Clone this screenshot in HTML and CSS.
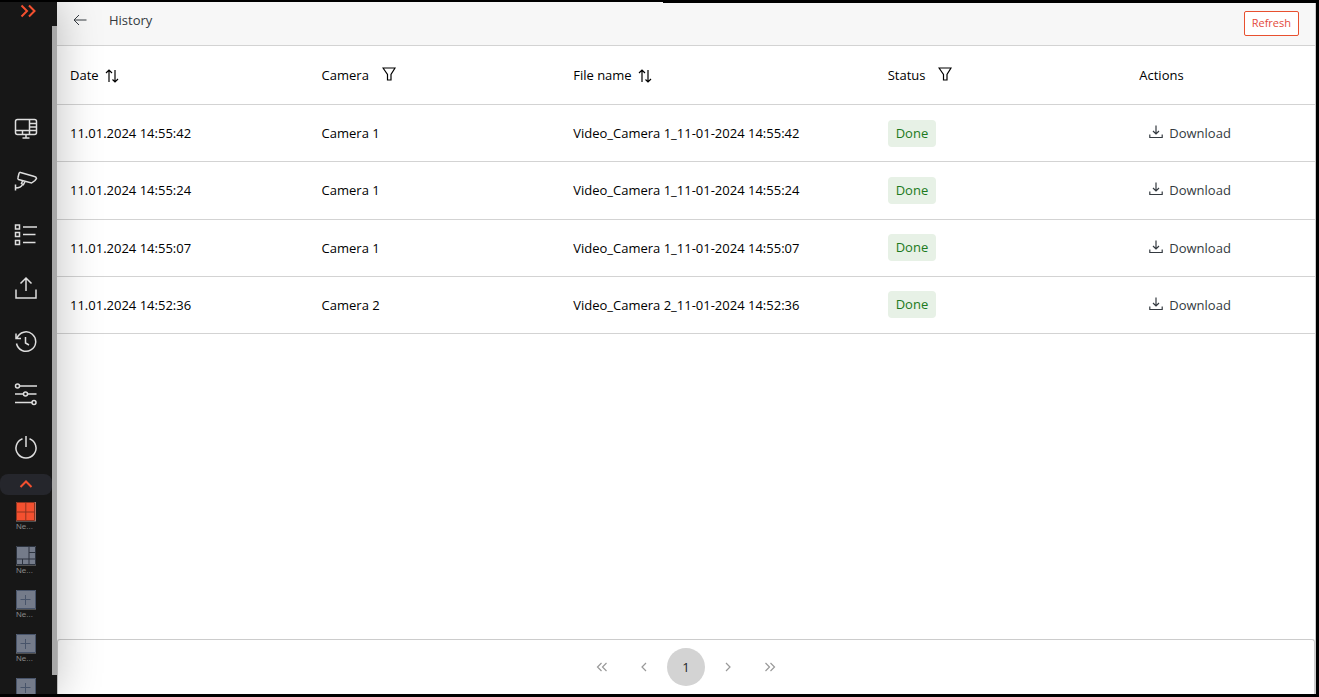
FILE: index.html
```html
<!DOCTYPE html>
<html lang="en">
<head>
<meta charset="utf-8">
<title>History</title>
<link rel="stylesheet" href="styles.css">
</head>
<body>
<svg class="sprite" aria-hidden="true">
  <symbol id="sort" viewBox="0 0 14 14"><path d="M4 13V1M1 4l3-3 3 3M10 1v12M7.500 10.500 10 13l3-3"/></symbol>
  <symbol id="filter" viewBox="0 0 14 14"><path d="M1 1h12L9 7.500V13H5.500V7.500z"/></symbol>
  <symbol id="download" viewBox="0 0 14 14"><path d="M7 .5v8.500M4 6l3 3 3-3M.8 9.500v3h12.400v-3"/></symbol>
  <symbol id="plus-tile" viewBox="0 0 20 20"><path fill="#747b8a" d="M0 0h20v19H0z"/><path fill="none" stroke="#48546a" d="M.5.500h19v18H.5zM9.500 5v10M4.500 9.500h10"/></symbol>
</svg>
<div class="app">
  <aside class="sidebar">
    <button class="expand" aria-label="Expand menu"><svg width="16" height="14" viewBox="0 0 16 14"><path d="M1.500 1.500 7 7l-5.500 5.500M9 1.500 14.500 7 9 12.500"/></svg></button>
    <div class="scroller">
      <nav class="nav">
        <button aria-label="Monitor"><svg viewBox="0 0 24 24"><rect x="1.500" y="2.500" width="21" height="15" rx="2"/><path d="M15.500 2.500v11M1.500 13.500h21M8.500 13.500v4M15.500 13.500v4M15.500 6.500h7M15.500 10h7M12 17.500v3.500M8.500 21h7"/></svg></button>
        <button aria-label="Cameras"><svg viewBox="0 0 24 24"><path d="M6.500 2.500 20.500 6.500Q22.500 7 22.500 8.500L21 10.500 17.500 13 4.500 9.500Q3.500 9 4 7.500L5 3.500Q5.500 2 6.500 2.500zM8.500 11 7.500 13.500 9.500 14.500 11 11.500M8.500 14.500Q7 18 1.500 18M1.500 14.500v6"/></svg></button>
        <button aria-label="Events"><svg viewBox="0 0 24 24"><path d="M1.500 2h4v4h-4zM1.500 9.500h4v4h-4zM1.500 17.500h4v4h-4zM9 4h14M9 11.500h12.500M9 19.500h12.500"/></svg></button>
        <button aria-label="Export"><svg viewBox="0 0 24 24"><path d="M12 15V2M6.500 7.500 12 2l5.500 5.500M2 13.500v8.500h20v-8.500"/></svg></button>
        <button aria-label="History"><svg viewBox="0 0 24 24"><path d="M3 9A9.700 9.700 0 1 1 2.500 14.500M2 4.500v5h5M11.500 8v6l3.500 2"/></svg></button>
        <button aria-label="Settings"><svg viewBox="0 0 24 24"><circle cx="3.500" cy="4" r="2"/><circle cx="11.500" cy="12" r="2"/><circle cx="20" cy="20.500" r="2"/><path d="M5.500 4H23M1 12h8.500M13.500 12H22.500M1 20.500h17"/></svg></button>
        <button aria-label="Power"><svg viewBox="0 0 24 24"><path d="M8.500 3.700A10 10 0 1 0 15.500 3.700M12 1v11"/></svg></button>
      </nav>
      <button class="collapse" aria-label="Collapse layouts"><svg width="14" height="8" viewBox="0 0 14 8"><path d="M1.500 7 7 1.500 12.500 7"/></svg></button>
      <div class="layouts">
        <button><svg viewBox="0 0 20 20"><path fill="#f4502f" d="M0 0h20v19H0z"/><path fill="none" stroke="#8f3420" d="M.5.500h18v18H.5zM9.800 0v19M0 10h19"/></svg>Ne...</button>
        <button><svg viewBox="0 0 20 20"><path fill="#747b8a" d="M0 0h20v19H0z"/><path fill="none" stroke="#2c333f" d="M.5.500h19v18H.5zM13 0v19M0 13h19M6.500 13v6M13 6.500h7"/></svg>Ne...</button>
        <button><svg><use href="#plus-tile"/></svg>Ne...</button>
        <button><svg><use href="#plus-tile"/></svg>Ne...</button>
        <button aria-label="New layout"><svg><use href="#plus-tile"/></svg></button>
      </div>
    </div>
    <div class="thumb"></div>
  </aside>
  <main class="main">
    <header class="bar">
      <button class="back" aria-label="Back"><svg width="14" height="12" viewBox="0 0 14 12"><path d="M13.500 6H1M6 1 1 6l5 5"/></svg></button>
      <h1>History</h1>
      <button class="refresh">Refresh</button>
    </header>
    <div class="content">
      <table>
        <thead>
          <tr>
            <th class="c20">Date<button class="sort" aria-label="Sort by date"><svg><use href="#sort"/></svg></button></th>
            <th class="c20">Camera<button class="filter" aria-label="Filter by camera"><svg><use href="#filter"/></svg></button></th>
            <th class="c25">File name<button class="sort" aria-label="Sort by file name"><svg><use href="#sort"/></svg></button></th>
            <th class="c20">Status<button class="filter" aria-label="Filter by status"><svg><use href="#filter"/></svg></button></th>
            <th class="c15">Actions</th>
          </tr>
        </thead>
        <tbody>
          <tr><td>11.01.2024 14:55:42</td><td>Camera 1</td><td>Video_Camera 1_11-01-2024 14:55:42</td><td><span class="status">Done</span></td><td><button class="download"><svg><use href="#download"/></svg>Download</button></td></tr>
          <tr><td>11.01.2024 14:55:24</td><td>Camera 1</td><td>Video_Camera 1_11-01-2024 14:55:24</td><td><span class="status">Done</span></td><td><button class="download"><svg><use href="#download"/></svg>Download</button></td></tr>
          <tr><td>11.01.2024 14:55:07</td><td>Camera 1</td><td>Video_Camera 1_11-01-2024 14:55:07</td><td><span class="status">Done</span></td><td><button class="download"><svg><use href="#download"/></svg>Download</button></td></tr>
          <tr><td>11.01.2024 14:52:36</td><td>Camera 2</td><td>Video_Camera 2_11-01-2024 14:52:36</td><td><span class="status">Done</span></td><td><button class="download"><svg><use href="#download"/></svg>Download</button></td></tr>
        </tbody>
      </table>
    </div>
    <nav class="pager" aria-label="Pages">
      <button aria-label="First page"><svg viewBox="0 0 12 10"><path d="M5.500 1 1.500 5l4 4M10.500 1l-4 4 4 4"/></svg></button>
      <button aria-label="Previous page"><svg viewBox="0 0 12 10"><path d="M8 1 4 5l4 4"/></svg></button>
      <button class="current">1</button>
      <button aria-label="Next page"><svg viewBox="0 0 12 10"><path d="m4 1 4 4-4 4"/></svg></button>
      <button aria-label="Last page"><svg viewBox="0 0 12 10"><path d="m1.500 1 4 4-4 4M6.500 1l4 4-4 4"/></svg></button>
    </nav>
  </main>
</div>
</body>
</html>
```
FILE: styles.css
```css
* { box-sizing: border-box; }
body {
  margin: 0;
  background: #000;
  color: #000;
  font: 13px/20px "Open Sans", "Noto Sans", sans-serif;
}
button {
  padding: 0;
  border: 0;
  background: none;
  color: inherit;
  font: inherit;
  cursor: pointer;
}
svg { display: block; fill: none; stroke: currentColor; }
.sprite { position: absolute; width: 0; height: 0; }

.app {
  position: relative;
  display: flex;
  height: 100vh;
  border: solid #000;
  border-width: 2px 3px 3px 0;
  overflow: hidden;
}
.app::after {
  content: "";
  position: absolute;
  top: 0;
  left: 663px;
  right: 0;
  height: 1px;
  background: #000;
  z-index: 2;
}

.sidebar {
  position: relative;
  z-index: 1;
  flex: none;
  display: flex;
  flex-direction: column;
  width: 57px;
  padding-right: 5px;
  background: #171717;
  box-shadow: 0 0 45px rgba(0, 0, 0, .26);
}
.expand {
  display: flex;
  justify-content: center;
  height: 24px;
  padding: 2px 0 0 4px;
  color: #f4502f;
}
.expand svg, .collapse svg { stroke-width: 2; }
.scroller { flex: 1; min-height: 0; overflow: hidden; }
.thumb {
  position: absolute;
  top: 24px;
  right: 0;
  bottom: 19px;
  width: 5px;
  background: #a8a8a8;
}
.nav { display: flex; flex-direction: column; padding-top: 76px; color: #dedede; }
.nav button { display: flex; align-items: center; justify-content: center; height: 53px; }
.nav svg { width: 24px; height: 24px; stroke-width: 1.500; }
.collapse {
  display: flex;
  justify-content: center;
  width: 100%;
  height: 21px;
  margin-top: 1px;
  padding-top: 6px;
  border-radius: 8px;
  background: #25262c;
  color: #f4502f;
}
.layouts { display: flex; flex-direction: column; padding-top: 7px; }
.layouts button {
  display: flex;
  flex-direction: column;
  align-items: flex-start;
  height: 44px;
  padding-left: 16px;
  color: #8a8a8a;
  font: 8px/10px "Liberation Sans", sans-serif;
}
.layouts svg { width: 20px; height: 20px; }

.main { flex: 1; min-width: 0; display: flex; flex-direction: column; background: #fff; border-right: 1px solid #ccc; }
.bar {
  display: flex;
  align-items: center;
  height: 44px;
  padding: 0 16px;
  border-bottom: 1px solid #d3d3d3;
  background: #f7f7f7;
  color: #343a40;
}
.bar h1 { flex: 1; margin: 0 0 8px 22px; font-size: 13px; font-weight: 400; }
.back { margin-bottom: 8px; }
.refresh {
  height: 25px;
  padding: 0 7px 2px;
  border: 1px solid #e8502f;
  border-radius: 2px;
  background: #fff;
  color: #e34a3b;
  font-size: 11px;
}

.content { flex: 1; min-height: 0; overflow: hidden; }
table { width: 100%; height: 288px; table-layout: fixed; border-collapse: separate; border-spacing: 0; }
th, td { padding: 0 13px; border-bottom: 1px solid #d3d3d3; text-align: left; font-weight: 400; white-space: nowrap; }
th { height: 59px; }
.c20 { width: 20%; }
.c25 { width: 25%; }
.c15 { width: 15%; }
th button { display: inline-block; vertical-align: middle; }
th svg, .download svg { width: 14px; height: 14px; margin-bottom: 2px; stroke-width: 1.200; }
.sort { margin-left: 6px; }
.filter { margin-left: 13px; }
.filter svg { margin-bottom: 4px; }
.status {
  display: inline-block;
  padding: 4px 8px;
  border-radius: 4px;
  background: #e7f1e6;
  color: #1c7a20;
  line-height: 19px;
}
.download { display: flex; align-items: center; gap: 6px; margin-left: 10px; color: #343a40; }

.pager {
  display: flex;
  align-items: center;
  justify-content: center;
  gap: 4px;
  height: 55px;
  border: 1px solid #ccc;
  border-bottom: 0;
  border-radius: 3px 3px 0 0;
  color: #999;
}
.pager button { display: flex; align-items: center; justify-content: center; width: 38px; height: 38px; border-radius: 50%; }
.pager svg { width: 12px; height: 10px; stroke-width: 1.200; }
.pager .current { background: #d3d3d3; color: #212529; }
```
